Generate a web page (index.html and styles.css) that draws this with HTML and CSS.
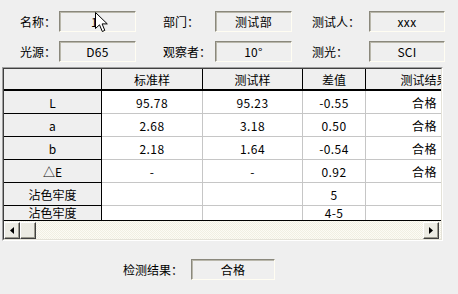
FILE: index.html
```html
<!DOCTYPE html>
<html>
<head>
  <title>检测结果</title>
  <link rel="stylesheet" href="styles.css">
</head>
<body>
  <div class="field-row">
    <span class="lbl lbl-a">名称：</span><div class="box box-name">1</div>
    <span class="lbl lbl-b">部门：</span><div class="box">测试部</div>
    <span class="lbl lbl-c">测试人：</span><div class="box box-c">xxx</div>
  </div>
  <div class="field-row">
    <span class="lbl lbl-a">光源：</span><div class="box">D65</div>
    <span class="lbl lbl-b">观察者：</span><div class="box">10°</div>
    <span class="lbl lbl-c">测光：</span><div class="box box-c">SCI</div>
  </div>

  <!-- result grid -->
  <div class="frame">
    <div class="frame-inner">
      <div class="grid-view">
        <div class="grid">
          <div class="cell head"></div>
          <div class="cell head">标准样</div>
          <div class="cell head">测试样</div>
          <div class="cell head">差值</div>
          <div class="cell head">测试结果</div>

          <div class="cell fixed">L</div>
          <div class="cell">95.78</div>
          <div class="cell">95.23</div>
          <div class="cell">-0.55</div>
          <div class="cell">合格</div>

          <div class="cell fixed">a</div>
          <div class="cell">2.68</div>
          <div class="cell">3.18</div>
          <div class="cell">0.50</div>
          <div class="cell">合格</div>

          <div class="cell fixed">b</div>
          <div class="cell">2.18</div>
          <div class="cell">1.64</div>
          <div class="cell">-0.54</div>
          <div class="cell">合格</div>

          <div class="cell fixed">△E</div>
          <div class="cell">-</div>
          <div class="cell">-</div>
          <div class="cell">0.92</div>
          <div class="cell">合格</div>

          <div class="cell fixed">沾色牢度</div>
          <div class="cell"></div>
          <div class="cell"></div>
          <div class="cell">5</div>
          <div class="cell"></div>

          <div class="cell fixed tail">沾色牢度</div>
          <div class="cell tail"></div>
          <div class="cell tail"></div>
          <div class="cell tail">4-5</div>
          <div class="cell tail"></div>
        </div>
      </div>
      <div class="hscroll">
        <div class="sb-btn">
          <svg width="4" height="7" viewBox="0 0 4 7"><path d="M4 0 L0 3.5 L4 7 Z" fill="#000"/></svg>
        </div>
        <div class="sb-btn sb-thumb"></div>
        <div class="sb-btn sb-right">
          <svg width="4" height="7" viewBox="0 0 4 7"><path d="M0 0 L4 3.5 L0 7 Z" fill="#000"/></svg>
        </div>
      </div>
    </div>
  </div>

  <div class="result-row">
    <span class="lbl lbl-r">检测结果：</span><div class="box box-r">合格</div>
  </div>

  <!-- mouse pointer -->
  <svg class="pointer" width="13" height="21" viewBox="0 0 13 21">
    <path d="M0.5 0.5 L0.5 16.5 L4.5 12.8 L7.3 19.5 L9.8 18.4 L7.1 11.9 L12.3 11.9 Z" fill="#fff" stroke="#000" stroke-width="1"/>
  </svg>
</body>
</html>
```

FILE: styles.css
```css
body {
  margin: 0;
  padding-top: 11px;
  background: #efefef;
  font-family: "Noto Sans CJK SC", "Liberation Sans", sans-serif;
  font-size: 12px;
  color: #000;
  position: relative;
  height: 283px;
  overflow: hidden;
}

.field-row {
  display: flex;
  align-items: center;
  height: 21px;
  padding-left: 20px;
  margin-bottom: 9px;
}

.lbl {
  white-space: nowrap;
  line-height: 21px;
}

.lbl-a {
  width: 39px;
}

.lbl-b {
  width: 52px;
  margin-left: 27px;
}

.lbl-c {
  width: 57px;
  margin-left: 20px;
}

.box {
  box-sizing: border-box;
  width: 77px;
  height: 21px;
  border: 1px solid;
  border-color: #8a887c #fffdf2 #fffdf2 #8a887c;
  box-shadow: inset 1px 1px #b9b7ab;
  display: flex;
  align-items: center;
  justify-content: center;
  font-size: 12px;
  letter-spacing: 0.3px;
}

.box-name {
  padding-right: 6px;
}

.box-c {
  width: 76px;
}

/* grid frame */
.frame {
  box-sizing: border-box;
  width: 441px;
  height: 174px;
  margin: -4px 0 0 2px;
  border: 1px solid;
  border-color: #a0a0a0 #ffffff #ffffff #a0a0a0;
}

.frame-inner {
  height: 100%;
  box-sizing: border-box;
  border: 1px solid;
  border-color: #404040 #e4e2d8 #e4e2d8 #404040;
  display: flex;
  flex-direction: column;
}

.grid-view {
  height: 151px;
  overflow: hidden;
  background: #fff;
}

.grid {
  display: grid;
  grid-template-columns: 98px 101px 100px 63px 118px;
  grid-template-rows: 22px repeat(6, 23px);
  width: 480px;
}

.cell {
  box-sizing: border-box;
  display: flex;
  align-items: center;
  justify-content: center;
  border-right: 1px solid #c6c6c6;
  border-bottom: 1px solid #c6c6c6;
  background: #fff;
  white-space: nowrap;
  overflow: hidden;
  letter-spacing: 0.4px;
}

.head {
  background: #efefef;
  border-right-color: #000;
  border-bottom: 2px solid #000;
  letter-spacing: 0;
}

.fixed {
  background: #efefef;
  border-right-color: #000;
  border-bottom-color: #000;
  letter-spacing: 0;
}

.tail {
  align-items: flex-start;
  line-height: 13px;
}

/* horizontal scrollbar */
.hscroll {
  flex: 1;
  display: flex;
  align-items: center;
  border-top: 1px solid #000;
  padding: 0 2px 0 0;
  background: repeating-conic-gradient(#f1efe3 0 25%, #fcfbf5 0 50%) 0 0 / 2px 2px;
}

.sb-btn {
  box-sizing: border-box;
  width: 16px;
  height: 17px;
  background: #ecebe3;
  border: 1px solid;
  border-color: #ffffff #404040 #404040 #ffffff;
  box-shadow: inset -1px -1px #9a988c;
  display: flex;
  align-items: center;
  justify-content: center;
}

.sb-right {
  margin-left: auto;
}

.result-row {
  display: flex;
  align-items: center;
  height: 21px;
  padding-left: 123px;
  margin-top: 18px;
}

.lbl-r {
  width: 68px;
}

.box-r {
  width: 84px;
}

.pointer {
  position: absolute;
  left: 95px;
  top: 12px;
}
```
